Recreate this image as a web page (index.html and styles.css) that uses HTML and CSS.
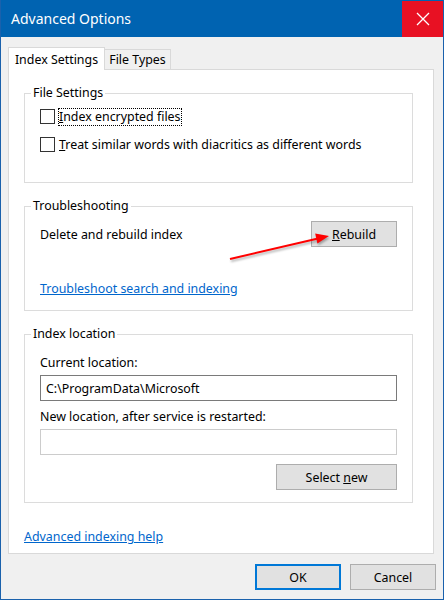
FILE: index.html
```html
<!DOCTYPE html>
<html lang="en">
<head>
<meta charset="utf-8">
<title>Advanced Options</title>
<link rel="stylesheet" href="styles.css">
</head>
<body>
<div class="window">
  <div class="titlebar">
    <span class="title">Advanced Options</span>
    <div class="close">
      <svg width="14" height="14" viewBox="0 0 14 14"><path d="M1 1 L13 13 M13 1 L1 13" stroke="#fff" stroke-width="1.3" fill="none"/></svg>
    </div>
  </div>
  <div class="content">
    <div class="tabs">
      <div class="tab active">Index Settings</div>
      <div class="tab">File Types</div>
    </div>
    <div class="panel">
      <fieldset class="group g1">
        <legend>File Settings</legend>
        <div class="check"><span class="box"></span><span class="label focus"><u>I</u>ndex encrypted files</span></div>
        <div class="check"><span class="box"></span><span class="label"><u>T</u>reat similar words with diacritics as different words</span></div>
      </fieldset>
      <fieldset class="group g2">
        <legend>Troubleshooting</legend>
        <div class="ts-row">
          <span>Delete and rebuild index</span>
          <button class="btn rebuild"><u>R</u>ebuild</button>
        </div>
        <a class="link ts-link" href="#">Troubleshoot search and indexing</a>
      </fieldset>
      <fieldset class="group g3">
        <legend>Index location</legend>
        <div class="field-label first">Current location:</div>
        <div class="input">C:\ProgramData\Microsoft</div>
        <div class="field-label">New location, after service is restarted:</div>
        <div class="input disabled"></div>
        <div class="select-row"><button class="btn select">Select <u>n</u>ew</button></div>
      </fieldset>
      <a class="link help" href="#">Advanced indexing help</a>
    </div>
    <div class="footer">
      <button class="btn ok">OK</button>
      <button class="btn cancel">Cancel</button>
    </div>
  </div>
  <svg class="arrow" width="444" height="600" viewBox="0 0 444 600">
    <line x1="230" y1="259" x2="318" y2="238.5" stroke="#ff0000" stroke-width="2"/>
    <polygon points="329,236 317.4,243.6 315.2,233.4" fill="#ff0000"/>
  </svg>
</div>
</body>
</html>
```
FILE: styles.css
```css
* { box-sizing: border-box; }

body {
  margin: 0;
  font-family: "Noto Sans", "Open Sans", sans-serif;
  font-size: 12.4px;
  color: #000;
}

.window {
  position: relative;
  width: 444px;
  height: 600px;
  border: 1px solid #1a61ac;
  border-top: 0;
  background: #f0f0f0;
  display: flex;
  flex-direction: column;
}

.titlebar {
  height: 37px;
  background: #0063b1;
  display: flex;
  align-items: flex-start;
  flex-shrink: 0;
}

.title {
  color: #fff;
  font-size: 14px;
  line-height: 37px;
  padding-left: 10px;
}

.close {
  margin-left: auto;
  margin-top: 1px;
  width: 41px;
  height: 36px;
  background: #e81123;
  display: flex;
  align-items: center;
  justify-content: center;
}

.content {
  padding: 10px 7px 0 7px;
}

.tabs {
  display: flex;
  align-items: flex-end;
  height: 23px;
  margin-bottom: -1px;
  position: relative;
  z-index: 1;
}

.tab {
  height: 20px;
  margin-bottom: 1px;
  width: 66px;
  border: 1px solid #d9d9d9;
  border-bottom: 0;
  border-left: 0;
  background: #f0f0f0;
  display: flex;
  align-items: center;
  justify-content: center;
}

.tab.active {
  height: 23px;
  margin-bottom: 0;
  width: 97px;
  border-left: 1px solid #d9d9d9;
  background: #fff;
}

.panel {
  width: 426px;
  height: 485px;
  border: 1px solid #d9d9d9;
  background: #fff;
  padding: 0 20px 0 15px;
}

.group {
  margin: 15px 0 0 0;
  width: 389px;
  min-width: 0;
  border: 1px solid #dcdcdc;
  padding: 7px 15px 0 15px;
}

.group legend {
  margin-left: -9px;
  padding: 0 2px;
  line-height: 16px;
}

.g1 { padding-bottom: 29px; }
.g2 { padding-bottom: 13px; }
.g3 { padding-bottom: 12px; }

.check {
  display: flex;
  align-items: center;
  height: 17px;
}

.check + .check { margin-top: 11px; }

.box {
  width: 15px;
  height: 15px;
  border: 1px solid #333;
  background: #fff;
  flex-shrink: 0;
}

.label {
  margin-left: 3px;
  line-height: 16px;
  border: 1px dotted transparent;
  white-space: nowrap;
}

.label.focus { border-color: #000; }

.ts-row {
  display: flex;
  justify-content: space-between;
  align-items: center;
}

.btn {
  height: 26px;
  padding: 0;
  background: #e1e1e1;
  border: 1px solid #adadad;
  font: inherit;
  color: #000;
}

.rebuild { width: 86px; }

.link {
  display: inline-block;
  line-height: 16px;
  color: #0066cc;
  text-decoration: underline;
}

.ts-link { margin-top: 34px; }

.field-label {
  line-height: 16px;
  margin-top: 8px;
  margin-bottom: 4px;
}

.field-label.first { margin-top: 6px; }

.input {
  height: 26px;
  border: 1px solid #7a7a7a;
  background: #fff;
  padding-left: 5px;
  display: flex;
  align-items: center;
}

.input.disabled { border-color: #cccccc; }

.select-row {
  display: flex;
  justify-content: flex-end;
  margin-top: 9px;
}

.select { width: 121px; }

.help { margin-top: 26px; }

.footer {
  display: flex;
  justify-content: flex-end;
  gap: 9px;
  margin-top: 10px;
}

.ok, .cancel { width: 86px; }

.ok { border: 2px solid #0078d7; }

.arrow {
  position: absolute;
  left: -1px;
  top: 0;
  pointer-events: none;
  filter: drop-shadow(1px 2px 1px rgba(0, 0, 0, 0.3));
}
```
